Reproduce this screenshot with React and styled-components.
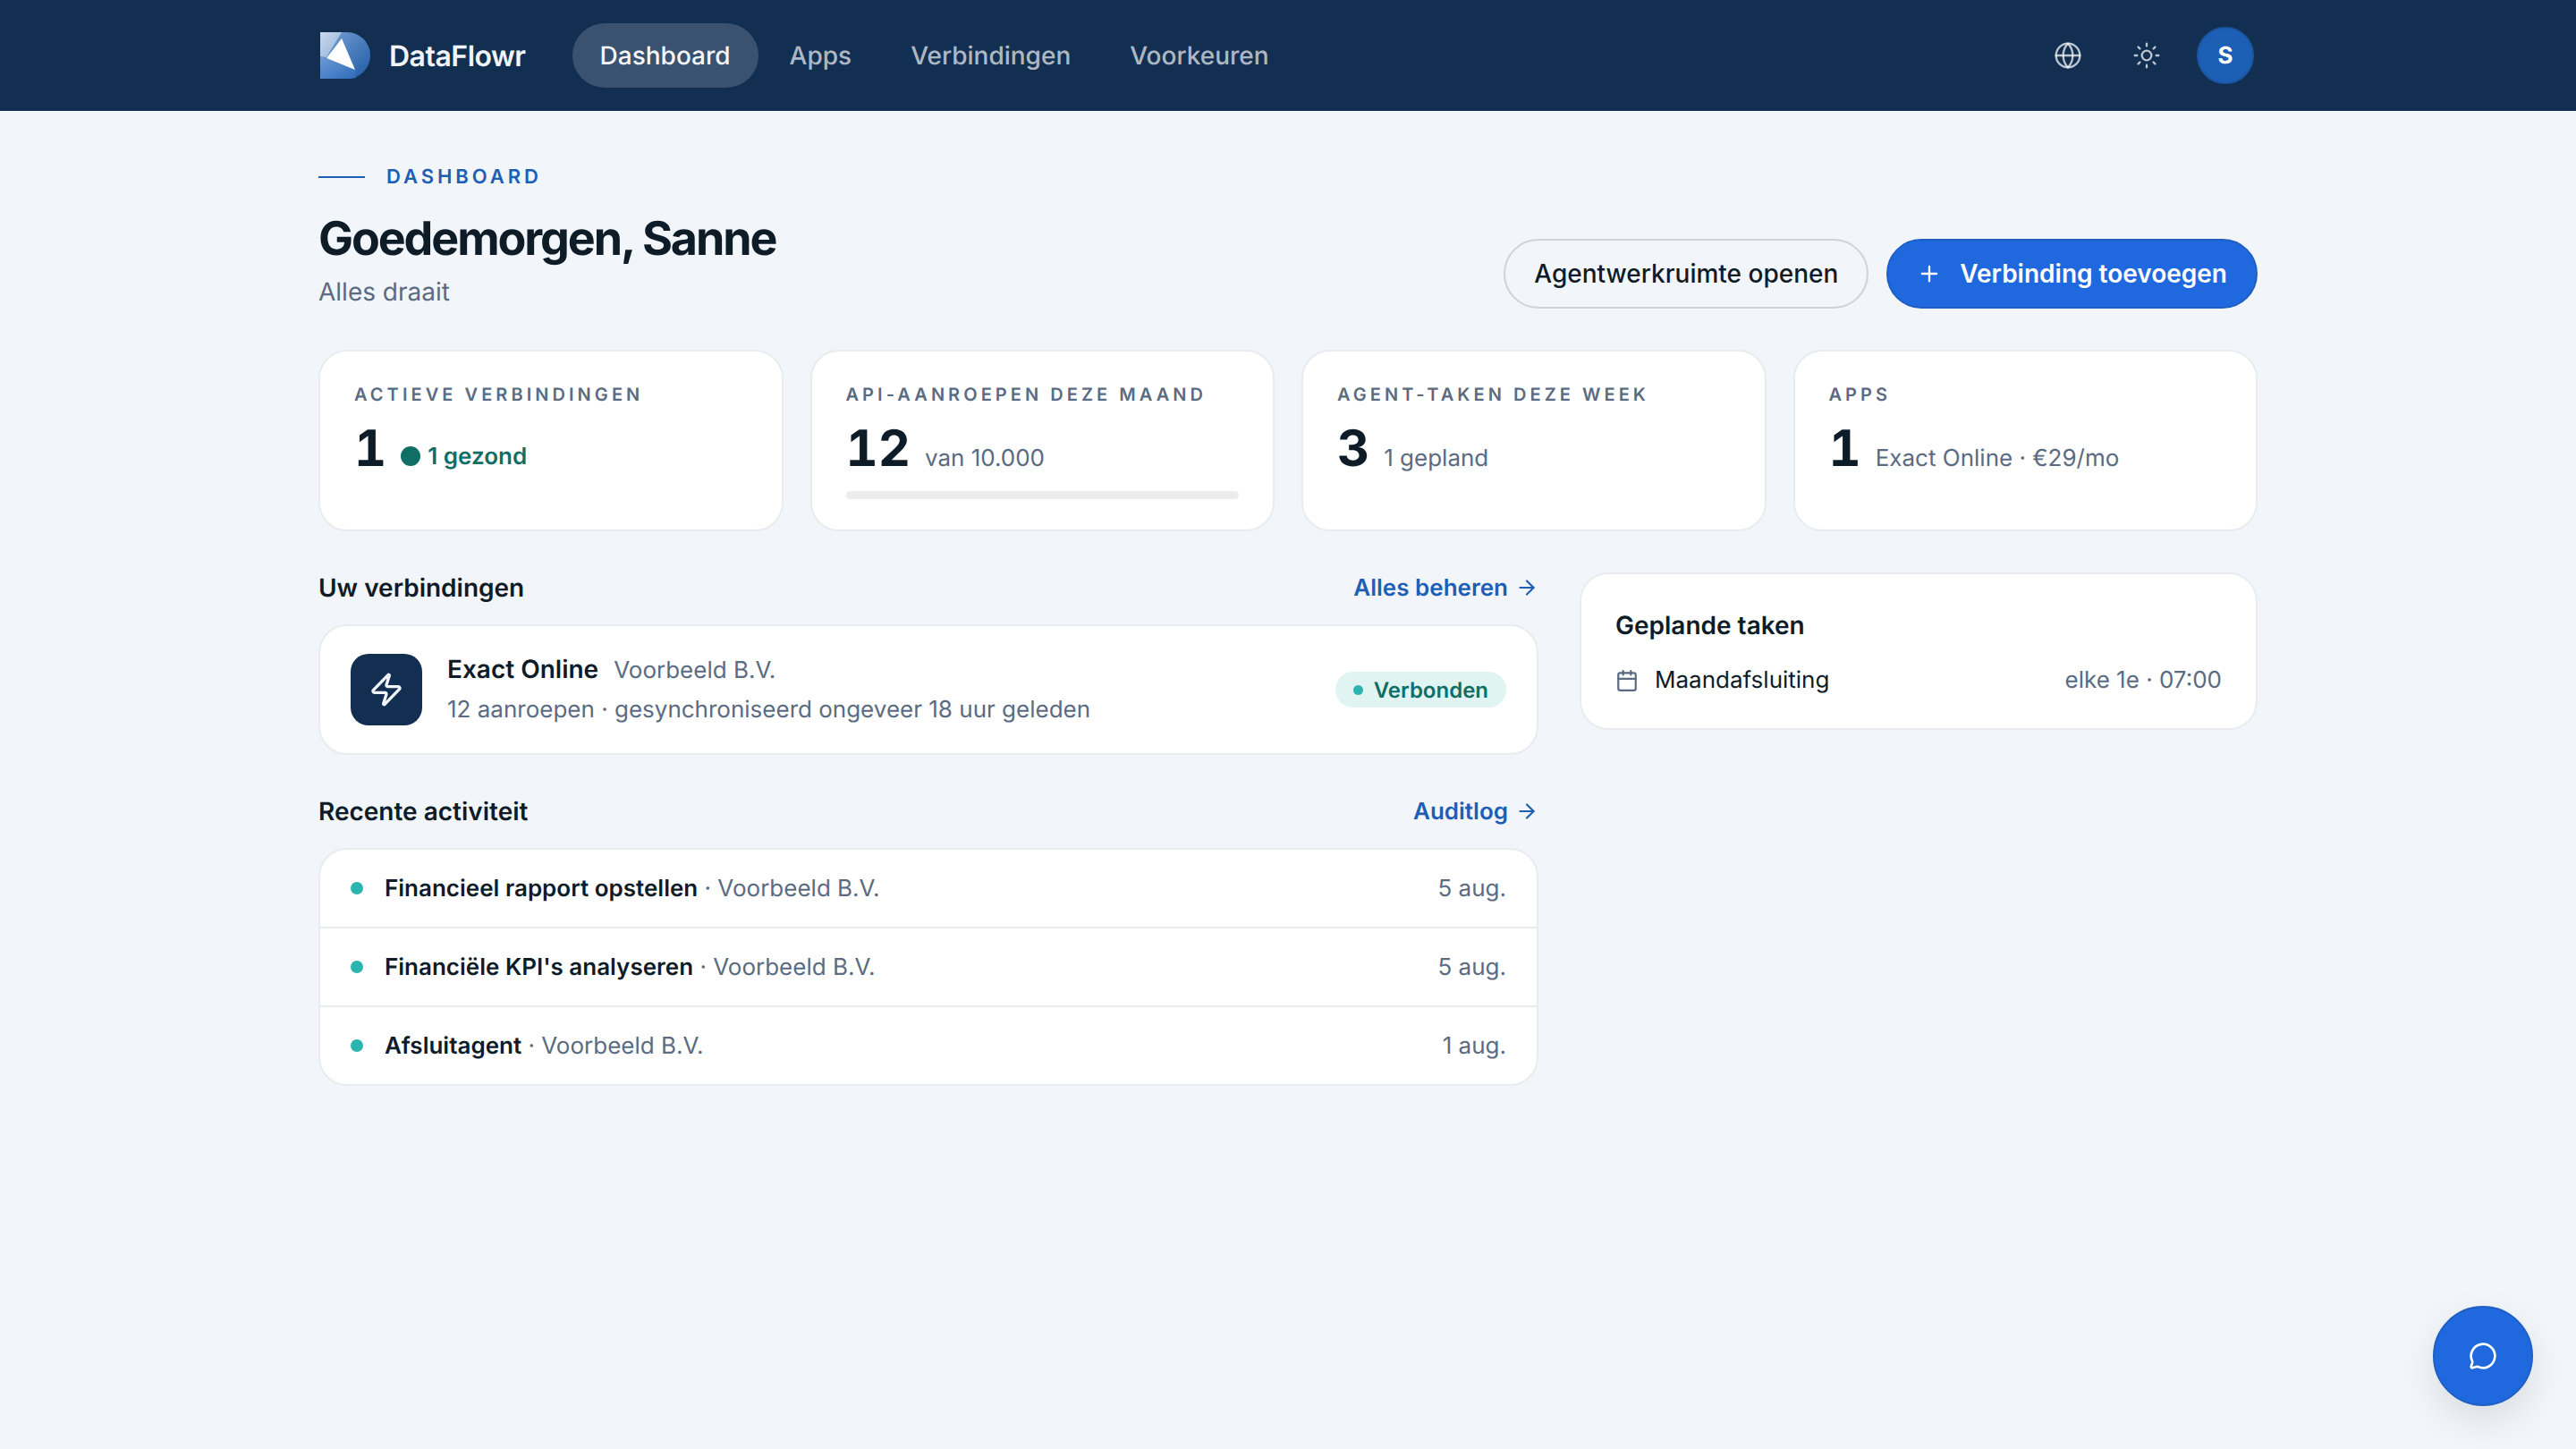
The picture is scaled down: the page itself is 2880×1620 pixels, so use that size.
import React from "react";
import styled, { createGlobalStyle } from "styled-components";
import { Globe, Sun, Plus, ArrowRight, Zap, Calendar, MessageCircle } from "lucide-react";

const Global = createGlobalStyle`
  html, body { margin: 0; padding: 0; background: #f2f5f9; }
  body {
    font-family: Inter, "Liberation Sans", sans-serif;
    color: #0e1c28;
    text-rendering: geometricPrecision;
    font-optical-sizing: none;
    font-variation-settings: "opsz" 14;
  }
  * { box-sizing: border-box; }
`;

const Page = styled.div`
  min-height: 1620px;
  background: #f2f5f9;
`;
const Header = styled.header`
  height: 124px;
  background: #122f52;
`;
const HeaderInner = styled.div`
  width: 2168px;
  height: 100%;
  margin: 0 auto;
  padding: 0 4px 0 2px;
  display: flex;
  align-items: center;
`;
const Brand = styled.div`
  display: flex;
  align-items: center;
  gap: 21px;
  font-size: 32px;
  font-weight: 600;
  letter-spacing: -0.5px;
  color: #f1f4f8;
  margin-right: 52px;
`;
const Nav = styled.nav`
  display: flex;
  align-items: center;
  gap: 4px;
  flex: 1;
`;
const NavItem = styled.a`
  height: 72px;
  padding: 0 31px;
  display: flex;
  align-items: center;
  border-radius: 36px;
  font-size: 28px;
  font-weight: 500;
  color: ${(p) => (p.$active ? "#f5f7fa" : "rgba(255,255,255,0.68)")};
  background: ${(p) => (p.$active ? "#3a5270" : "transparent")};
`;
const HeaderTools = styled.div`
  display: flex;
  align-items: center;
  color: rgba(255, 255, 255, 0.72);
`;
const ToolIcon = styled.span`
  width: 88px;
  display: flex;
  justify-content: center;
`;
const Avatar = styled.div`
  width: 64px;
  height: 64px;
  margin-left: 12px;
  border-radius: 50%;
  background: #1d5fb5;
  border: 2px solid #1a559f;
  color: #fff;
  font-size: 26px;
  font-weight: 700;
  display: flex;
  align-items: center;
  justify-content: center;
`;
const Main = styled.main`
  width: 2168px;
  margin: 0 auto;
  padding-top: 62px;
`;
const Eyebrow = styled.div`
  display: flex;
  align-items: center;
  gap: 24px;
  font-size: 22px;
  line-height: 24px;
  font-weight: 600;
  letter-spacing: 3.96px;
  color: #1d5fb5;
  &::before {
    content: "";
    width: 52px;
    height: 2px;
    background: #1d5fb5;
  }
`;
const PageHead = styled.div`
  display: flex;
  justify-content: space-between;
  align-items: flex-end;
  margin-top: 25px;
`;
const Title = styled.h1`
  margin: 0;
  font-size: 52px;
  line-height: 64px;
  font-weight: 700;
  letter-spacing: -2.1px;
  font-variation-settings: "opsz" 26;
  color: #0e1c28;
`;
const Subtitle = styled.p`
  margin: 8px 0 0;
  font-size: 28px;
  line-height: 38px;
  color: #5a6b82;
`;
const Actions = styled.div`
  display: flex;
  gap: 20px;
`;
const Button = styled.button`
  height: 78px;
  padding: 0 32px;
  display: flex;
  align-items: center;
  gap: 20px;
  border-radius: 39px;
  font-family: inherit;
  font-size: 28px;
  font-weight: ${(p) => (p.$primary ? 600 : 500)};
  border: 2px solid ${(p) => (p.$primary ? "#1d5fc4" : "#cfd3d8")};
  background: ${(p) => (p.$primary ? "#2068dd" : "transparent")};
  color: ${(p) => (p.$primary ? "#fff" : "#0e1c28")};
`;
const Stats = styled.section`
  display: grid;
  grid-template-columns: repeat(4, 1fr);
  gap: 30px;
  margin-top: 46px;
`;
const Card = styled.div`
  background: #fff;
  border: 2px solid #e9ecef;
  border-radius: 32px;
`;
const StatCard = styled(Card)`
  height: 203px;
  padding: 34px 38px;
`;
const StatLabel = styled.div`
  font-size: 20px;
  line-height: 28px;
  font-weight: 600;
  letter-spacing: 4.06px;
  color: #5a6b82;
`;
const StatRow = styled.div`
  display: flex;
  align-items: baseline;
  gap: 16px;
  margin-top: 14px;
`;
const StatValue = styled.span`
  font-size: 56px;
  line-height: 64px;
  font-weight: 700;
  font-variant-numeric: tabular-nums;
  color: #0e1c28;
`;
const StatNote = styled.span`
  font-size: 26px;
  color: #5a6b82;
`;
const Healthy = styled.span`
  display: flex;
  align-items: center;
  gap: 8px;
  font-size: 26px;
  font-weight: 600;
  color: #0f6e66;
  &::before {
    content: "";
    width: 22px;
    height: 22px;
    border-radius: 50%;
    background: #0f6e66;
  }
`;
const Track = styled.div`
  height: 9px;
  margin-top: 16px;
  border-radius: 5px;
  background: #ebecee;
`;
const Columns = styled.div`
  display: grid;
  grid-template-columns: 1364px 758px;
  gap: 46px;
  margin-top: 46px;
  align-items: start;
`;
const Column = styled.div`
  display: flex;
  flex-direction: column;
`;
const SectionHead = styled.div`
  display: flex;
  justify-content: space-between;
  align-items: center;
  height: 34px;
  margin: ${(p) => (p.$later ? "46px" : "0")} 0 24px;
`;
const SectionTitle = styled.h2`
  margin: 0;
  font-size: 28px;
  font-weight: 600;
  color: #0e1c28;
`;
const SectionLink = styled.a`
  display: flex;
  align-items: center;
  gap: 8px;
  font-size: 26px;
  font-weight: 600;
  color: #1d5fb5;
`;
const ConnectionCard = styled(Card)`
  height: 146px;
  padding: 0 34px;
  display: flex;
  align-items: center;
  gap: 28px;
`;
const ConnectionIcon = styled.div`
  width: 80px;
  height: 80px;
  border-radius: 20px;
  background: #122f52;
  color: #f1f4f8;
  display: flex;
  align-items: center;
  justify-content: center;
`;
const ConnectionBody = styled.div`
  flex: 1;
`;
const ConnectionTop = styled.div`
  display: flex;
  align-items: baseline;
  gap: 17px;
  line-height: 38px;
`;
const ConnectionName = styled.span`
  font-size: 28px;
  font-weight: 600;
`;
const Muted = styled.span`
  font-size: 26px;
  color: #5a6b82;
`;
const ConnectionMeta = styled.div`
  margin-top: 6px;
  font-size: 26px;
  line-height: 38px;
  color: #5a6b82;
`;
const Badge = styled.span`
  height: 40px;
  padding: 0 20px;
  display: flex;
  align-items: center;
  gap: 12px;
  border-radius: 20px;
  background: #e0f4f1;
  font-size: 24px;
  font-weight: 600;
  color: #0f6e66;
  &::before {
    content: "";
    width: 11px;
    height: 11px;
    border-radius: 50%;
    background: #2cb5b0;
  }
`;
const ActivityList = styled(Card)`
  overflow: hidden;
`;
const ActivityRow = styled.div`
  height: 86px;
  padding: 0 34px;
  display: flex;
  align-items: center;
  gap: 24px;
  & + & {
    height: 88px;
    border-top: 2px solid #e9ecef;
  }
  &::before {
    content: "";
    width: 14px;
    height: 14px;
    border-radius: 50%;
    background: #2cb5b0;
  }
`;
const ActivityText = styled.div`
  flex: 1;
  font-size: 26px;
  color: #5a6b82;
`;
const ActivityName = styled.strong`
  font-weight: 600;
  color: #0e1c28;
`;
const TasksCard = styled(Card)`
  height: 176px;
  padding: 37px 38px;
`;
const TasksTitle = styled.div`
  font-size: 28px;
  line-height: 40px;
  font-weight: 600;
`;
const TaskRow = styled.div`
  display: flex;
  align-items: center;
  gap: 18px;
  margin-top: 26px;
  font-size: 26px;
  color: #0e1c28;
  svg { color: #5a6b82; }
`;
const TaskName = styled.span`
  flex: 1;
`;
const Fab = styled.button`
  position: fixed;
  right: 48px;
  bottom: 48px;
  width: 112px;
  height: 112px;
  border-radius: 50%;
  border: 2px solid #1d5fc4;
  background: #2068dd;
  color: #fff;
  display: flex;
  align-items: center;
  justify-content: center;
  box-shadow: 0 16px 40px rgba(14, 28, 40, 0.1);
`;

const Logo = () => (
  <svg width="56" height="52" viewBox="0 0 56 52">
    <defs>
      <linearGradient id="lgA" x1="0" y1="0" x2="1" y2="1">
        <stop offset="0" stopColor="#7ba3d6" />
        <stop offset="1" stopColor="#1f5aa5" />
      </linearGradient>
      <linearGradient id="lgB" x1="0" y1="0" x2="1" y2="1">
        <stop offset="0" stopColor="#cbdaec" />
        <stop offset="1" stopColor="#8fb0da" />
      </linearGradient>
      <linearGradient id="lgC" x1="0" y1="0" x2="1" y2="1">
        <stop offset="0" stopColor="#6d9bd6" />
        <stop offset="1" stopColor="#2f6cb9" />
      </linearGradient>
    </defs>
    <path d="M0 0H30A26 26 0 0 1 30 52H0Z" fill="url(#lgA)" />
    <path d="M0 0H24L7 28L0 27Z" fill="url(#lgB)" />
    <path d="M0 27L39 42L40 51Q36 52 30 52H0Z" fill="url(#lgC)" />
    <path d="M24 7L7 29L39 42Z" fill="#fff" />
  </svg>
);

export default function App() {
  return (
    <Page>
      <Global />
      <Header>
        <HeaderInner>
          <Brand>
            <Logo />
            DataFlowr
          </Brand>
          <Nav>
            <NavItem $active>Dashboard</NavItem>
            <NavItem>Apps</NavItem>
            <NavItem>Verbindingen</NavItem>
            <NavItem>Voorkeuren</NavItem>
          </Nav>
          <HeaderTools>
            <ToolIcon><Globe size={32} strokeWidth={1.75} /></ToolIcon>
            <ToolIcon><Sun size={32} strokeWidth={1.75} /></ToolIcon>
            <Avatar>S</Avatar>
          </HeaderTools>
        </HeaderInner>
      </Header>
      <Main>
        <Eyebrow>DASHBOARD</Eyebrow>
        <PageHead>
          <div>
            <Title>Goedemorgen, Sanne</Title>
            <Subtitle>Alles draait</Subtitle>
          </div>
          <Actions>
            <Button>Agentwerkruimte openen</Button>
            <Button $primary><Plus size={28} strokeWidth={2} />Verbinding toevoegen</Button>
          </Actions>
        </PageHead>
        <Stats>
          <StatCard>
            <StatLabel>ACTIEVE VERBINDINGEN</StatLabel>
            <StatRow><StatValue>1</StatValue><Healthy>1 gezond</Healthy></StatRow>
          </StatCard>
          <StatCard>
            <StatLabel>API-AANROEPEN DEZE MAAND</StatLabel>
            <StatRow><StatValue>12</StatValue><StatNote>van 10.000</StatNote></StatRow>
            <Track />
          </StatCard>
          <StatCard>
            <StatLabel>AGENT-TAKEN DEZE WEEK</StatLabel>
            <StatRow><StatValue>3</StatValue><StatNote>1 gepland</StatNote></StatRow>
          </StatCard>
          <StatCard>
            <StatLabel>APPS</StatLabel>
            <StatRow><StatValue>1</StatValue><StatNote>Exact Online · €29/mo</StatNote></StatRow>
          </StatCard>
        </Stats>
        <Columns>
          <Column>
            <SectionHead>
              <SectionTitle>Uw verbindingen</SectionTitle>
              <SectionLink>Alles beheren <ArrowRight size={26} /></SectionLink>
            </SectionHead>
            <ConnectionCard>
              <ConnectionIcon><Zap size={40} strokeWidth={2} /></ConnectionIcon>
              <ConnectionBody>
                <ConnectionTop>
                  <ConnectionName>Exact Online</ConnectionName>
                  <Muted>Voorbeeld B.V.</Muted>
                </ConnectionTop>
                <ConnectionMeta>12 aanroepen · gesynchroniseerd ongeveer 18 uur geleden</ConnectionMeta>
              </ConnectionBody>
              <Badge>Verbonden</Badge>
            </ConnectionCard>
            <SectionHead $later>
              <SectionTitle>Recente activiteit</SectionTitle>
              <SectionLink>Auditlog <ArrowRight size={26} /></SectionLink>
            </SectionHead>
            <ActivityList>
              <ActivityRow>
                <ActivityText><ActivityName>Financieel rapport opstellen</ActivityName> · Voorbeeld B.V.</ActivityText>
                <Muted>5 aug.</Muted>
              </ActivityRow>
              <ActivityRow>
                <ActivityText><ActivityName>Financiële KPI's analyseren</ActivityName> · Voorbeeld B.V.</ActivityText>
                <Muted>5 aug.</Muted>
              </ActivityRow>
              <ActivityRow>
                <ActivityText><ActivityName>Afsluitagent</ActivityName> · Voorbeeld B.V.</ActivityText>
                <Muted>1 aug.</Muted>
              </ActivityRow>
            </ActivityList>
          </Column>
          <TasksCard>
            <TasksTitle>Geplande taken</TasksTitle>
            <TaskRow>
              <Calendar size={26} />
              <TaskName>Maandafsluiting</TaskName>
              <Muted>elke 1e · 07:00</Muted>
            </TaskRow>
          </TasksCard>
        </Columns>
      </Main>
      <Fab><MessageCircle size={32} strokeWidth={2} /></Fab>
    </Page>
  );
}
